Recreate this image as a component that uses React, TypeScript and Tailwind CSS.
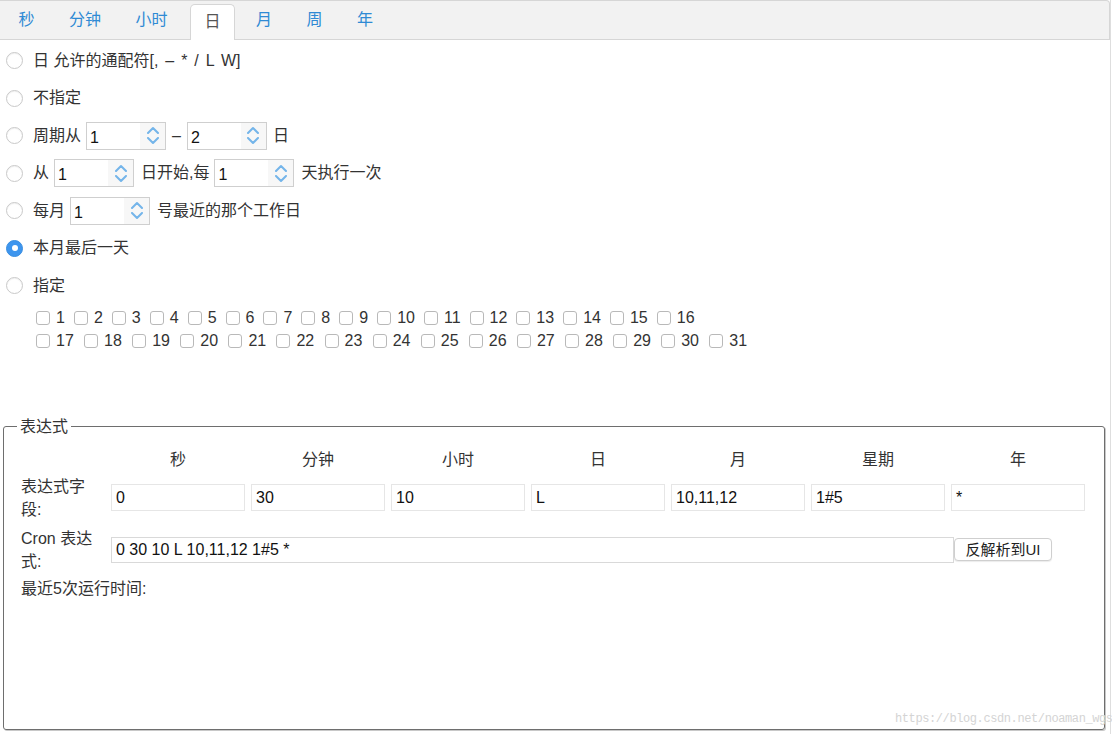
import React from "react";

const tabs = ["秒", "分钟", "小时", "日", "月", "周", "年"];

function Radio({ checked = false }: { checked?: boolean }) {
  return checked ? (
    <span className="w-[17px] h-[17px] rounded-full bg-[#3d95ee] border border-[#3a8ee0] flex items-center justify-center shrink-0">
      <span className="w-[6px] h-[6px] rounded-full bg-white" />
    </span>
  ) : (
    <span className="w-[17px] h-[17px] rounded-full bg-white border border-[#c9c9c9] shadow-[inset_0_1px_1px_rgba(0,0,0,0.06)] shrink-0" />
  );
}

function Spin({ value }: { value: string }) {
  return (
    <span className="flex w-[80px] h-[28px] border border-[#cfcfcf] bg-white shrink-0">
      <span className="flex-1 pl-[3px] pt-[5px] text-[16px] leading-[20px] text-[#111]">{value}</span>
      <span className="w-[25px] flex flex-col items-center justify-center gap-[3px] bg-[#f7f7f7]">
        <svg width="14" height="8" viewBox="0 0 14 8" fill="none">
          <polyline points="2,7 7,2 12,7" stroke="#74b5ea" strokeWidth="2" strokeLinecap="round" strokeLinejoin="round" />
        </svg>
        <svg width="14" height="8" viewBox="0 0 14 8" fill="none">
          <polyline points="2,1 7,6 12,1" stroke="#74b5ea" strokeWidth="2" strokeLinecap="round" strokeLinejoin="round" />
        </svg>
      </span>
    </span>
  );
}

function Row({ children, checked = false }: { children: React.ReactNode; checked?: boolean }) {
  return (
    <div className="h-[37.5px] flex items-center pl-[6px]">
      <Radio checked={checked} />
      <div className="ml-[10px] flex items-center gap-[5px] text-[16px] text-[#333] leading-[20px]">{children}</div>
    </div>
  );
}

function Check({ n }: { n: number }) {
  return (
    <span className="flex items-center gap-[6px]">
      <span className="w-[14px] h-[14px] rounded-[3px] border border-[#b9b9b9] bg-white" />
      <span className="text-[16px] leading-[20px] text-[#333]">{n}</span>
    </span>
  );
}

const fieldHeads = ["秒", "分钟", "小时", "日", "月", "星期", "年"];
const fieldVals = ["0", "30", "10", "L", "10,11,12", "1#5", "*"];

export default function App() {
  return (
    <div className="relative w-[1112px] h-[734px] bg-white overflow-hidden font-['Liberation_Sans','Noto_Sans_CJK_SC',sans-serif]">
      <div className="w-[1111px] h-full border-r border-[#dedede]">
        {/* tab bar */}
        <div className="h-[40px] bg-[#f2f2f2] border-t border-r border-b border-[#d6d6d6] rounded-tr-[4px] flex items-end pl-[5px] gap-[7.5px]">
          {tabs.map((t) =>
            t === "日" ? (
              <div
                key={t}
                className="h-[36px] mb-[-1px] ml-[1.5px] px-[13.5px] pb-[2px] bg-white border border-b-0 border-[#d6d6d6] rounded-t-[5px] flex items-center text-[16px] text-[#555]"
              >
                {t}
              </div>
            ) : (
              <div key={t} className="h-[36px] px-[13.5px] pb-[2px] flex items-center text-[16px] text-[#2f8ad4]">
                {t}
              </div>
            )
          )}
        </div>

        {/* options */}
        <div className="pt-[2px]">
          <Row>
            <span>
              日 允许的通配符<span className="[word-spacing:2.5px]">[, – * / L W]</span>
            </span>
          </Row>
          <Row>
            <span>不指定</span>
          </Row>
          <Row>
            <span>周期从</span>
            <Spin value="1" />
            <span className="mx-[1px]">–</span>
            <Spin value="2" />
            <span className="ml-[1px]">日</span>
          </Row>
          <Row>
            <span>从</span>
            <Spin value="1" />
            <span className="ml-[2px]">日开始,每</span>
            <Spin value="1" />
            <span className="ml-[2px]">天执行一次</span>
          </Row>
          <Row>
            <span>每月</span>
            <Spin value="1" />
            <span className="ml-[2px]">号最近的那个工作日</span>
          </Row>
          <Row checked>
            <span>本月最后一天</span>
          </Row>
          <Row>
            <span>指定</span>
          </Row>
          <div className="pl-[36px] mt-[2px]">
            <div className="h-[23px] flex items-center gap-[9px]">
              {Array.from({ length: 16 }, (_, i) => (
                <Check key={i} n={i + 1} />
              ))}
            </div>
            <div className="h-[23px] flex items-center gap-[10.3px]">
              {Array.from({ length: 15 }, (_, i) => (
                <Check key={i} n={i + 17} />
              ))}
            </div>
          </div>
        </div>

        {/* expression fieldset */}
        <fieldset className="mt-[64px] ml-[3px] mr-[5px] h-[313px] border border-[#6e6e6e] rounded-[3px] shadow-[1px_1px_0_#c8c8c8] pl-[17px]">
          <legend className="ml-[-4px] px-[3px] text-[16px] leading-[20px] text-[#333]">表达式</legend>
          <div className="mt-[13px] flex items-center h-[20px]">
            <div className="w-[90px]" />
            <div className="flex gap-[6px]">
              {fieldHeads.map((h) => (
                <div key={h} className="w-[134px] text-center text-[16px] leading-[20px] text-[#333]">
                  {h}
                </div>
              ))}
            </div>
          </div>
          <div className="mt-[5px] flex items-center">
            <div className="w-[80px] mr-[10px] text-[16px] leading-[23px] text-[#333]">表达式字段:</div>
            <div className="flex gap-[6px]">
              {fieldVals.map((v, i) => (
                <div
                  key={i}
                  className="w-[134px] h-[27px] border border-[#e6e6e6] bg-white px-[4px] flex items-center text-[16px] text-[#111]"
                >
                  {v}
                </div>
              ))}
            </div>
          </div>
          <div className="mt-[6px] flex items-center">
            <div className="w-[80px] mr-[10px] text-[16px] leading-[23px] text-[#333]">Cron 表达式:</div>
            <div className="w-[843px] h-[26px] border border-[#d9d9d9] bg-white px-[4px] flex items-center text-[16px] text-[#111]">
              0 30 10 L 10,11,12 1#5 *
            </div>
            <button className="w-[98px] h-[23px] bg-white border border-[#cfcfcf] rounded-[4px] shadow-[0_1px_1px_rgba(0,0,0,0.08)] text-[15px] leading-[20px] text-[#222]">
              反解析到UI
            </button>
          </div>
          <div className="mt-[4.5px] text-[16px] leading-[23px] text-[#333]">最近5次运行时间:</div>
        </fieldset>
      </div>

      <div className="absolute left-[895px] top-[710px] whitespace-nowrap text-[12px] leading-[18px] text-[#d4d4d4] font-['Liberation_Mono',monospace] tracking-[-0.4px]">
        https://blog.csdn.net/noaman_wgs
      </div>
    </div>
  );
}
